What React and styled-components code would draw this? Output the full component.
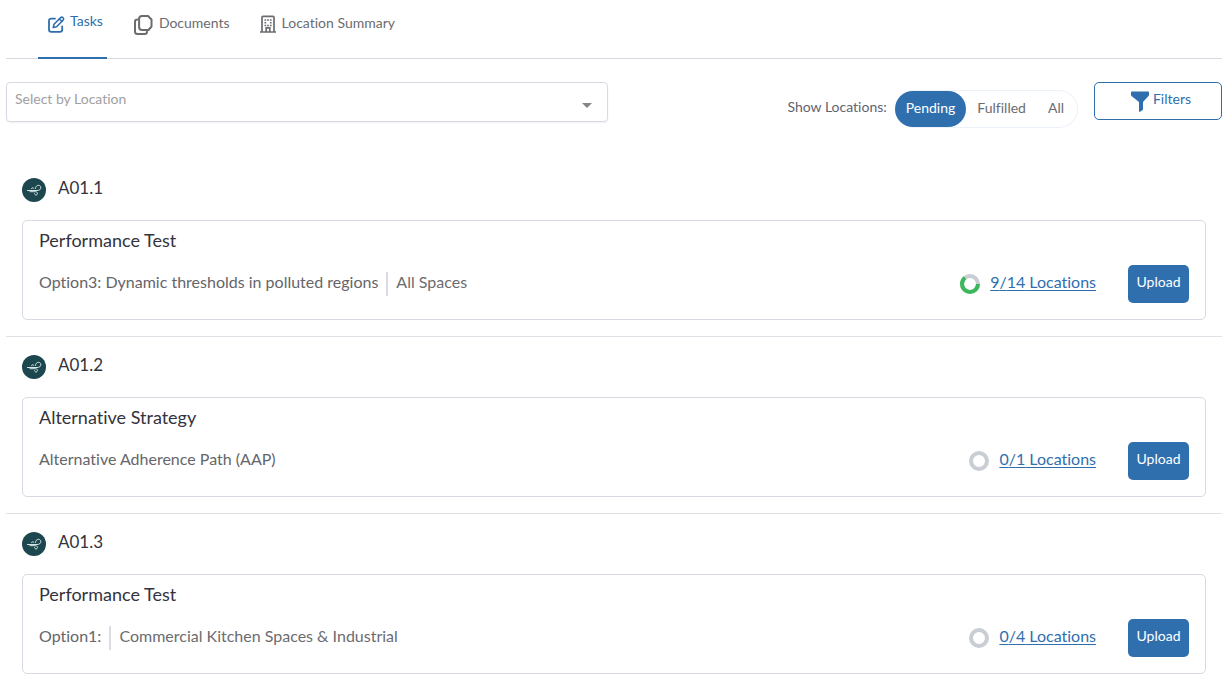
import React, { useState } from "react";
import styled, { createGlobalStyle } from "styled-components";

const GlobalStyle = createGlobalStyle`
  *, *::before, *::after {
    box-sizing: border-box;
  }
  body {
    margin: 0;
    background: #fff;
    color: #33333d;
    font-family: Lato, "Open Sans", sans-serif;
    font-size: 14px;
    font-variant-ligatures: none;
    line-height: 20px;
  }
  button, select {
    font: inherit;
    font-variant-ligatures: none;
  }
`;

const Page = styled.main`
  padding: 0 10px 0 6px;
`;

const Tabs = styled.nav`
  display: flex;
  height: 59px;
  padding-left: 32px;
  gap: 18px;
  border-bottom: 1px solid #d9d9e3;
`;

const Tab = styled.a`
  display: flex;
  align-items: flex-start;
  gap: ${(props) => (props.$active ? "5px" : "6px")};
  height: 59px;
  padding: ${(props) => (props.$active ? "11px 4px 0 10px" : "13px 4px 0 8px")};
  border-bottom: 2px solid ${(props) => (props.$active ? "#2f6fae" : "transparent")};
  color: ${(props) => (props.$active ? "#2f6fae" : "#6c6c70")};
  font-size: 14px;
  text-decoration: none;

  svg {
    margin-top: ${(props) => (props.$active ? "5px" : "2px")};
  }
`;

const Toolbar = styled.div`
  display: grid;
  grid-template-columns: 1fr 1fr;
  align-items: start;
  gap: 12px;
  padding: 23px 0 32px;
`;

const SelectBox = styled.div`
  display: grid;
  height: 40px;
  align-items: center;

  > * {
    grid-area: 1 / 1;
  }
  svg {
    justify-self: end;
    margin: 6px 16px 0 0;
    pointer-events: none;
  }
`;

const Select = styled.select`
  width: 100%;
  height: 40px;
  padding: 0 32px 6px 8px;
  appearance: none;
  background: #fff;
  border: 1px solid #d9d9e3;
  border-radius: 4px;
  box-shadow: 0 1px 2px rgba(0, 0, 0, 0.06);
  color: #a0a0a3;
`;

const Controls = styled.div`
  display: flex;
  justify-content: flex-end;
  align-items: flex-start;
  gap: 16px;
  height: 46px;
`;

const Toggle = styled.div`
  display: flex;
  gap: 8px;
  margin-top: 8px;
  color: #5f6470;
  line-height: 34px;
`;

const Pill = styled.div`
  display: flex;
  height: 38px;
  padding-right: 2px;
  border: solid #ebf1f8;
  border-width: 1px 1px 1px 0;
  border-radius: 19px;
`;

const PillButton = styled.button`
  padding: 0 11px 4px;
  border: 0;
  border-radius: 18px;
  background: ${(props) => (props.$active ? "#2f6fae" : "transparent")};
  color: ${(props) => (props.$active ? "#fff" : "#6c6c70")};
  cursor: pointer;
`;

const FilterButton = styled.button`
  display: flex;
  align-items: center;
  justify-content: center;
  gap: 4px;
  width: 128px;
  height: 38px;
  padding: 0 0 0 6px;
  background: #fff;
  border: 1px solid #2f6fae;
  border-radius: 5px;
  color: #2f6fae;
  cursor: pointer;

  span {
    padding-bottom: 4px;
  }
`;

const Section = styled.section`
  padding: 18px 16px 16px;

  & + & {
    border-top: 1px solid #e0e0e6;
  }
`;

const SectionHead = styled.header`
  display: flex;
  align-items: center;
  gap: 12px;
  height: 24px;
  margin-bottom: 18px;
`;

const Code = styled.h2`
  margin: 0;
  padding-bottom: 4px;
  font-size: 17px;
  font-weight: 400;
  line-height: 24px;
`;

const Card = styled.article`
  padding: 7px 16px 16px;
  border: 1px solid #d9d9e3;
  border-radius: 5px;
`;

const Title = styled.h3`
  margin: 0 0 13px;
  font-size: 18px;
  font-weight: 400;
  line-height: 24px;
`;

const Row = styled.div`
  display: flex;
  align-items: center;
  color: #6c6c70;
  font-size: 16px;
  line-height: 20px;
`;

const Option = styled.span`
  padding-bottom: 4px;
  color: #65656a;

  & + span {
    margin-left: 8px;
    padding: 0 0 4px 8px;
    border-left: 2px solid #dcdce4;
  }
`;

const Progress = styled.div`
  display: flex;
  align-items: center;
  gap: 10px;
  margin-left: auto;
`;

const LocationsLink = styled.a`
  padding-bottom: 4px;
  color: #2f6fae;
  text-underline-offset: 2px;
`;

const UploadButton = styled.button`
  width: 61px;
  height: 38px;
  margin-left: 32px;
  padding: 0 0 4px;
  background: #2f6fae;
  border: 0;
  border-radius: 5px;
  color: #fff;
  font-size: 14px;
  cursor: pointer;
`;

const EditIcon = () => (
  <svg width="17" height="17" viewBox="0 0 17 17" fill="none" stroke="currentColor" strokeWidth="1.8" strokeLinecap="round" strokeLinejoin="round">
    <path d="M7 2.600H3.200c-1.300 0-2.200.9-2.200 2.200v8.800c0 1.300.9 2.300 2.200 2.300h8.800c1.300 0 2.200-1 2.200-2.300V10.500" />
    <path d="M6 8.300l6.400-6.400c.8-.9 1.800-.9 2.600-.2.800.8.800 1.800 0 2.600L8.600 10.700l-3.400.9Z" strokeWidth="1.600" />
    <path d="M11.300 3l2.600 2.600" strokeWidth="1.400" />
  </svg>
);

const DocumentsIcon = () => (
  <svg width="20" height="20" viewBox="-1 0 20 20" fill="none" stroke="currentColor" strokeWidth="2" strokeLinejoin="round" strokeLinecap="round">
    <path d="M8 1h6l3.500 3.500v7L14.500 15H8c-1.700 0-2.900-1.200-2.900-2.900V3.800C5.100 2.100 6.300 1 8 1Z" />
    <path d="M3.500 4.500C1.900 4.500 1 5.300 1 6.800v9.700C1 18.100 2 19 3.500 19h7.200c1.500 0 2.300-.8 2.300-2.300" />
  </svg>
);

const BuildingIcon = () => (
  <svg width="16" height="18" viewBox="0 0 16 18" fill="none" stroke="currentColor" strokeWidth="1.700">
    <path d="M0 17h16M2 17V2.500c0-.7.400-1.100 1.100-1.100h9.800c.7 0 1.100.4 1.100 1.100V17M6.200 16.500v-3.700h3.600v3.700" />
    <path d="M4.500 5h1.700M7.200 5h1.700M9.900 5h1.700M4.500 7.800h1.700M9.900 7.800h1.700M4.500 10.500h1.700M7.200 10.500h1.700M9.900 10.500h1.700" strokeWidth="1.500" />
  </svg>
);

const FunnelIcon = () => (
  <svg width="18" height="21" viewBox="0 0 18 21" fill="currentColor">
    <path d="M.8.500h16.400c.5 0 .8.300.8.800v2.400c0 .5-.2.900-.5 1.200L12 11v7.200c0 .4-.2.700-.5.900l-2.400 1.600c-.6.400-1.100.1-1.100-.6V11L.5 4.900C.2 4.600 0 4.200 0 3.700V1.300C0 .8.300.500.8.500Z" />
  </svg>
);

const AirIcon = () => (
  <svg width="24" height="24" viewBox="0 0 24 24" fill="none" stroke="#d8e6e8" strokeLinecap="round" aria-hidden="true">
    <circle cx="12" cy="12" r="12" fill="#1c474e" stroke="none" />
    <path d="M5.500 12.500h9.500c2.400 0 3.800-1.200 3.800-2.900 0-1.400-1-2.300-2.300-2.300-1.700 0-2.900 1.400-3.200 3.200" strokeWidth="1" />
    <path d="M8 13.700h5.200c1.500 0 2.300.8 2.300 1.700s-.7 1.600-1.500 1.600-1.400-.6-1.400-1.300" strokeWidth="1" />
    <path d="M9.500 10.600c.3-1 1.600-1.200 2.200-.4" strokeWidth="1" />
  </svg>
);

// The arc starts at three o'clock and runs clockwise
const Ring = ({ done, total }) => (
  <svg width="20" height="20" viewBox="0 0 20 20" fill="none" strokeWidth="4" aria-hidden="true">
    <circle cx="10" cy="10" r="8" stroke="#c9cdd4" />
    {done > 0 && (
      <circle cx="10" cy="10" r="8" stroke="#3bb85c" pathLength={total} strokeDasharray={`${done} ${total}`} />
    )}
  </svg>
);

const tasks = [
  { code: "A01.1", title: "Performance Test", option: "Option3: Dynamic thresholds in polluted regions", spaces: "All Spaces", done: 9, total: 14 },
  { code: "A01.2", title: "Alternative Strategy", option: "Alternative Adherence Path (AAP)", done: 0, total: 1 },
  { code: "A01.3", title: "Performance Test", option: "Option1:", spaces: "Commercial Kitchen Spaces & Industrial", done: 0, total: 4 },
];

const Task = ({ code, title, option, spaces, done, total }) => (
  <Section>
    <SectionHead>
      <AirIcon />
      <Code>{code}</Code>
    </SectionHead>
    <Card>
      <Title>{title}</Title>
      <Row>
        <Option>{option}</Option>
        {spaces && <span>{spaces}</span>}
        <Progress>
          <Ring done={done} total={total} />
          <LocationsLink href="#locations">
            {done}/{total} Locations
          </LocationsLink>
        </Progress>
        <UploadButton type="button">Upload</UploadButton>
      </Row>
    </Card>
  </Section>
);

export default function App() {
  const [show, setShow] = useState("Pending");

  return (
    <>
      <GlobalStyle />
      <Page>
        <Tabs>
          <Tab href="#tasks" $active aria-current="page">
            <EditIcon />
            Tasks
          </Tab>
          <Tab href="#documents">
            <DocumentsIcon />
            Documents
          </Tab>
          <Tab href="#summary">
            <BuildingIcon />
            Location Summary
          </Tab>
        </Tabs>
        <Toolbar>
          <SelectBox>
            <Select aria-label="Select by Location" defaultValue="">
              <option value="">Select by Location</option>
            </Select>
            <svg width="10" height="5" viewBox="0 0 10 5" fill="#858585">
              <path d="M0 0h10L5 5Z" />
            </svg>
          </SelectBox>
          <Controls>
            <Toggle>
              <span id="show-label">Show Locations:</span>
              <Pill role="group" aria-labelledby="show-label">
                {["Pending", "Fulfilled", "All"].map((name) => (
                  <PillButton
                    key={name}
                    type="button"
                    $active={show === name}
                    aria-pressed={show === name}
                    onClick={() => setShow(name)}
                  >
                    {name}
                  </PillButton>
                ))}
              </Pill>
            </Toggle>
            <FilterButton type="button">
              <FunnelIcon />
              <span>Filters</span>
            </FilterButton>
          </Controls>
        </Toolbar>
        {tasks.map((task) => (
          <Task key={task.code} {...task} />
        ))}
      </Page>
    </>
  );
}
